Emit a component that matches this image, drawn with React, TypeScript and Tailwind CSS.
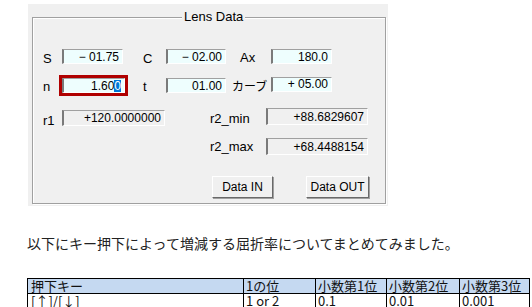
const ui = "font-['Liberation_Sans','Noto_Sans_CJK_JP',sans-serif]";
const jp = "font-['Noto_Sans_CJK_JP',sans-serif]";

function Field({ w, h = 15, ro = false, children }: { w: number; h?: number; ro?: boolean; children: React.ReactNode }) {
  return (
    <div
      className={`flex items-center justify-end whitespace-nowrap border-t border-l-2 border-r border-b border-t-[#a0a0a0] border-l-[#7a7a7a] border-r-white border-b-white pr-[3px] text-[12px] leading-none text-black ${
        ro ? 'bg-[#f0f0f0]' : 'bg-[#eefefe]'
      }`}
      style={{ width: w, height: h }}
    >
      {children}
    </div>
  );
}

function Btn({ w, label }: { w: number; label: string }) {
  return (
    <div
      className="flex h-[22px] items-center justify-center border border-t-white border-l-white border-r-[#696969] border-b-[#696969] bg-[#f0f0f0] text-[12px] text-black shadow-[1px_1px_0_#a0a0a0]"
      style={{ width: w }}
    >
      {label}
    </div>
  );
}

export default function App() {
  return (
    <div className={`h-[307px] w-[532px] overflow-hidden bg-white ${ui}`}>
      {/* dialog */}
      <div className="ml-[28px] mt-[4px] h-[202px] w-[360px] bg-[#f0f0f0] pl-[4px] pt-[13px]">
        <div className="relative h-[187px] w-[354px] border border-[#a0a0a0] shadow-[inset_1px_1px_0_#fff,1px_1px_0_#fff]">
          <span className="absolute -top-[8px] left-[149px] bg-[#f0f0f0] px-[2px] text-[13px] leading-[14px] text-black">
            Lens Data
          </span>

          {/* S / C / Ax */}
          <div className="mt-[31px] flex h-[15px] items-center text-[13px] text-black">
            <span className="w-[29px] pl-[10px] pt-[4px]">S</span>
            <Field w={61}>− 01.75</Field>
            <span className="w-[43px] pl-[20px] pt-[4px]">C</span>
            <Field w={60}>− 02.00</Field>
            <span className="w-[45px] pl-[14px] pt-[2px]">Ax</span>
            <Field w={61}>180.0</Field>
          </div>

          {/* n / t / カーブ */}
          <div className="mt-[11px] flex h-[21px] items-center text-[13px] text-black">
            <span className="w-[26px] pl-[10px] pt-[2px]">n</span>
            <div className="border-[3px] border-[#b00000] p-0">
              <Field w={63}>
                1.60<span className="bg-[#0078d7] text-white">0</span>
              </Field>
            </div>
            <span className="w-[38px] pl-[15px] pt-[2px]">t</span>
            <Field w={60}>01.00</Field>
            <span className={`w-[45px] whitespace-nowrap pl-[6px] text-[12px] ${jp}`}>カーブ</span>
            <div className="-mt-[3px]">
              <Field w={61}>+ 05.00</Field>
            </div>
          </div>

          {/* r1 / r2_min */}
          <div className="mt-[12px] flex h-[17px] items-start text-[13px] text-black">
            <span className="mt-[3px] w-[29px] pl-[10px]">r1</span>
            <div className="mt-[2px]">
              <Field w={103} h={16} ro>
                +120.0000000
              </Field>
            </div>
            <span className="mt-[1px] w-[101px] pl-[45px]">r2_min</span>
            <Field w={102} h={17} ro>
              +88.6829607
            </Field>
          </div>

          {/* r2_max */}
          <div className="mt-[13px] flex h-[17px] items-center text-[13px] text-black">
            <span className="w-[233px] pl-[177px]">r2_max</span>
            <Field w={102} h={17} ro>
              +68.4488154
            </Field>
          </div>

          {/* buttons */}
          <div className="ml-[179px] mt-[21px] flex gap-[33px]">
            <Btn w={61} label="Data IN" />
            <Btn w={63} label="Data OUT" />
          </div>
        </div>
      </div>

      <p className={`ml-[27px] mt-[27px] text-[14px] leading-[20px] text-[#222] ${jp}`}>
        以下にキー押下によって増減する屈折率についてまとめてみました。
      </p>

      <table className={`ml-[27px] mt-[25px] border-collapse text-[13px] leading-[14px] text-[#111] ${jp}`}>
        <thead>
          <tr className="bg-[#c5d9f1]">
            <th className="h-[15px] w-[216px] border border-black px-[3px] py-0 text-left font-normal">押下キー</th>
            <th className="h-[15px] w-[72px] border border-black px-[2px] py-0 text-left font-normal">1の位</th>
            <th className="h-[15px] w-[71px] border border-black px-[2px] py-0 text-left font-normal">小数第1位</th>
            <th className="h-[15px] w-[73px] border border-black px-[2px] py-0 text-left font-normal">小数第2位</th>
            <th className="h-[15px] w-[70px] border border-black px-[2px] py-0 text-left font-normal">小数第3位</th>
          </tr>
        </thead>
        <tbody>
          <tr>
            <td className="h-[14px] border border-black px-[3px] py-0">[↑]/[↓]</td>
            <td className="h-[14px] border border-black px-[2px] py-0">1 or 2</td>
            <td className="h-[14px] border border-black px-[2px] py-0">0.1</td>
            <td className="h-[14px] border border-black px-[2px] py-0">0.01</td>
            <td className="h-[14px] border border-black px-[2px] py-0">0.001</td>
          </tr>
        </tbody>
      </table>
    </div>
  );
}
